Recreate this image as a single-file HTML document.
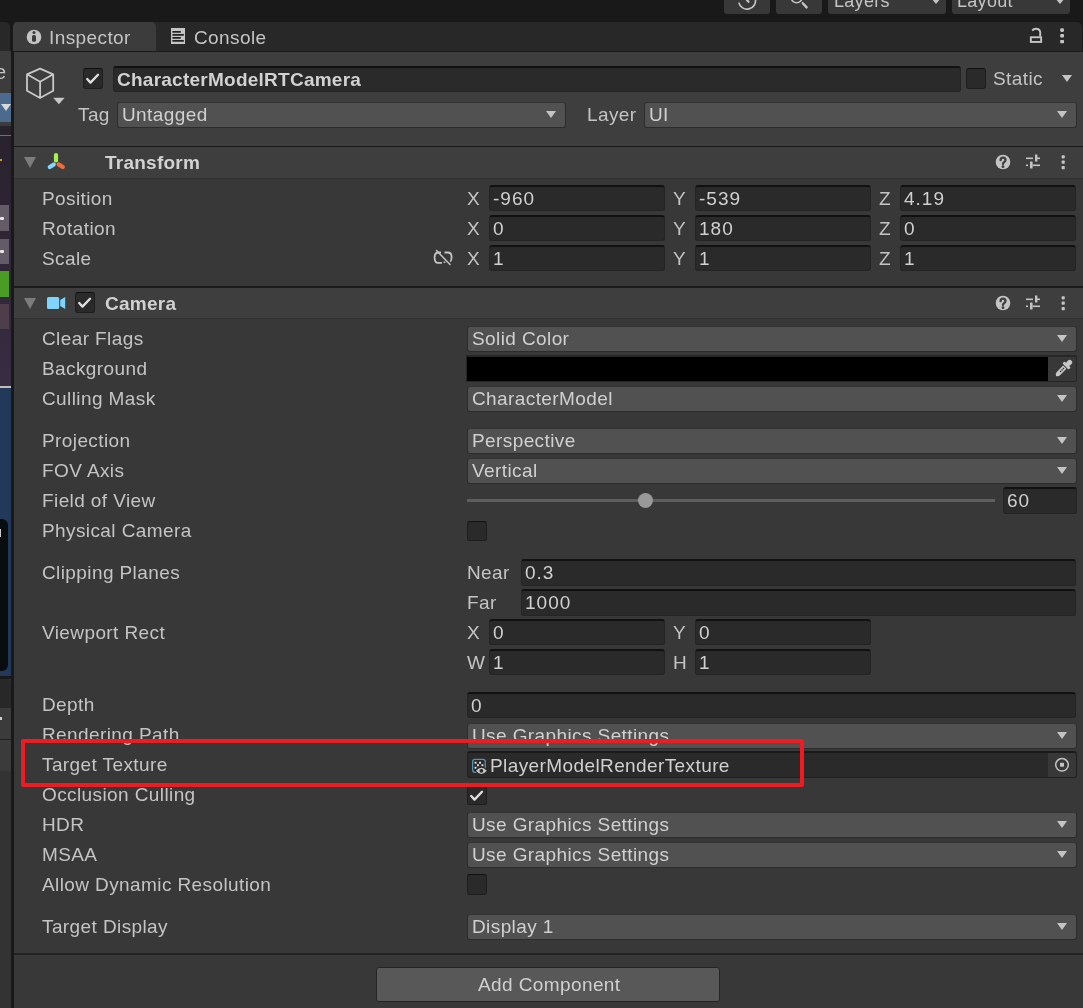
<!DOCTYPE html>
<html><head><meta charset="utf-8"><style>
*{box-sizing:border-box;margin:0;padding:0}
html,body{width:1083px;height:1008px;overflow:hidden;background:#191919;font-family:"Liberation Sans",sans-serif;color:#c4c4c4}
.a{position:absolute}
.t{position:absolute;white-space:nowrap;will-change:transform;font-size:19px;line-height:20px;letter-spacing:0.4px;color:#c4c4c4}
.v{color:#d0d0d0}
.b{font-weight:bold;color:#d2d2d2;letter-spacing:0.25px}
.fld{position:absolute;background:#2a2a2a;border:1px solid #242424;border-top:2px solid #111;border-radius:3px}
.dd{position:absolute;background:#515151;border:1px solid #2c2c2c;border-top-color:#333;border-radius:3px}
.tri{position:absolute;width:0;height:0;border-left:5.5px solid transparent;border-right:5.5px solid transparent;border-top:7px solid #c4c4c4}
.cb{position:absolute;width:20px;height:21px;background:#2a2a2a;border:1px solid #1e1e1e;border-top-color:#111;border-radius:3px}
</style></head><body>
<div class="a" style="left:0px;top:0px;width:1083px;height:22px;background:#191919;"></div>
<div class="a" style="left:724px;top:-4px;width:46px;height:18px;background:#383838;border-radius:3px"></div>
<div class="a" style="left:776px;top:-4px;width:46px;height:18px;background:#383838;border-radius:3px"></div>
<div class="a" style="left:828px;top:-4px;width:118px;height:18px;background:#383838;border-radius:3px"></div>
<div class="a" style="left:952px;top:-4px;width:118px;height:18px;background:#383838;border-radius:3px"></div>
<svg class="a" style="left:724px;top:0" width="100" height="14" viewBox="0 0 100 14">
<path d="M14.8 2.6 A8.4 8.4 0 0 0 31.3 -1.2" fill="none" stroke="#c4c4c4" stroke-width="1.7"/>
<path d="M22 -1 L24.5 1.8" stroke="#c4c4c4" stroke-width="2.2" stroke-linecap="round"/>
<circle cx="72.6" cy="-2.6" r="5.4" fill="none" stroke="#c4c4c4" stroke-width="1.6"/>
<path d="M78.8 3.2 L82.6 7.4" stroke="#c4c4c4" stroke-width="2.4" stroke-linecap="round"/>
</svg>
<div class="t " style="left:834px;top:-9px;font-size:18px;letter-spacing:0.3px">Layers</div>
<div class="tri" style="left:931px;top:-2px;border-top-width:6px"></div>
<div class="t " style="left:957px;top:-9px;font-size:18px;letter-spacing:0.3px">Layout</div>
<div class="tri" style="left:1055px;top:-2px;border-top-width:6px"></div>
<div class="a" style="left:0px;top:51px;width:11px;height:957px;background:#333333;"></div>
<div class="a" style="left:0px;top:22px;width:10px;height:29px;background:#282828;border-top-right-radius:5px"></div>
<div class="a" style="left:0px;top:51px;width:11px;height:42px;background:#3c3c3c;"></div>
<div class="t " style="left:-5px;top:62px;font-size:20px">e</div>
<div class="a" style="left:0px;top:93px;width:11px;height:29px;background:#4b6a8e;"></div>
<div class="a" style="left:1px;top:104px;width:0;height:0;border-left:5px solid transparent;border-right:5px solid transparent;border-top:7px solid #d8d8d8"></div>
<div class="a" style="left:0px;top:122px;width:11px;height:5px;background:#3c3c3c;"></div>
<div class="a" style="left:0px;top:126px;width:11px;height:261px;background:linear-gradient(#28222d,#2e2535 40%,#382c42);"></div>
<div class="a" style="left:0px;top:159px;width:2px;height:2px;background:#c89a20;"></div>
<div class="a" style="left:0px;top:135px;width:11px;height:1px;background:#707070;"></div>
<div class="a" style="left:0px;top:205px;width:9px;height:26px;background:#645b68;"></div>
<div class="a" style="left:0px;top:217px;width:4px;height:3px;background:#e6e6e6;border-radius:1px"></div>
<div class="a" style="left:0px;top:239px;width:9px;height:25px;background:#645b68;"></div>
<div class="a" style="left:0px;top:250px;width:4px;height:3px;background:#e6e6e6;border-radius:1px"></div>
<div class="a" style="left:0px;top:271px;width:9px;height:26px;background:#4a9c24;"></div>
<div class="a" style="left:0px;top:304px;width:9px;height:25px;background:#4d3e49;"></div>
<div class="a" style="left:0px;top:386px;width:11px;height:2px;background:#bdbdbd;"></div>
<div class="a" style="left:0px;top:388px;width:11px;height:288px;background:#22395a;"></div>
<div class="a" style="left:0px;top:519px;width:8px;height:152px;background:#0a0d10;border-radius:0 6px 6px 0"></div>
<div class="a" style="left:0px;top:529px;width:1px;height:8px;background:#cccccc;"></div>
<div class="a" style="left:0px;top:676px;width:11px;height:3px;background:#191919;"></div>
<div class="a" style="left:0px;top:679px;width:11px;height:29px;background:#282828;border-top-right-radius:4px"></div>
<div class="a" style="left:0px;top:708px;width:11px;height:31px;background:#3b3b3b;"></div>
<div class="a" style="left:0px;top:739px;width:11px;height:1px;background:#222222;"></div>
<div class="a" style="left:0px;top:717px;width:2px;height:3px;background:#d0d0d0;"></div>
<div class="a" style="left:0px;top:740px;width:11px;height:31px;background:#3b3b3b;"></div>
<div class="a" style="left:0px;top:771px;width:11px;height:237px;background:#333333;"></div>
<div class="a" style="left:11px;top:0px;width:3px;height:1008px;background:#191919;"></div>
<div class="a" style="left:14px;top:22px;width:1068px;height:29px;background:#282828;border-top-right-radius:5px"></div>
<div class="a" style="left:13px;top:22px;width:143px;height:29px;background:#3c3c3c;border-radius:5px 5px 0 0"></div>
<svg class="a" style="left:26px;top:29px" width="16" height="16" viewBox="0 0 16 16">
<circle cx="8" cy="8" r="7.3" fill="#c4c4c4"/>
<circle cx="8" cy="3.4" r="1.5" fill="#3c3c3c"/>
<rect x="6" y="6" width="4" height="6.8" rx="1.6" fill="#3c3c3c"/></svg>
<div class="t " style="left:49px;top:28px;">Inspector</div>
<svg class="a" style="left:171px;top:28px" width="14" height="16" viewBox="0 0 14 16">
<rect x="0" y="0" width="14" height="16" fill="#c4c4c4"/>
<rect x="1.2" y="3" width="8.8" height="1.7" rx="0.8" fill="#222"/>
<rect x="1.2" y="6" width="11.8" height="1.7" rx="0.8" fill="#222"/>
<rect x="1.2" y="9" width="8.8" height="1.7" rx="0.8" fill="#222"/>
<rect x="1.2" y="12" width="11.8" height="1.7" rx="0.8" fill="#222"/></svg>
<div class="t " style="left:194px;top:28px;">Console</div>
<svg class="a" style="left:1028px;top:26px" width="40" height="20" viewBox="0 0 40 20">
<rect x="2.85" y="11.25" width="10.3" height="4.7" fill="none" stroke="#c4c4c4" stroke-width="1.9"/>
<path d="M4.2 4.6 Q5.6 2.7 7.8 2.7 Q11.8 2.7 12.2 6.2 L12.2 10.5" fill="none" stroke="#c4c4c4" stroke-width="1.9"/>
<rect x="32.2" y="2.2" width="3.8" height="3.8" rx="1.4" fill="#c4c4c4"/><rect x="32.2" y="8" width="3.8" height="3.6" rx="1" fill="#c4c4c4"/><rect x="32.2" y="14" width="3.8" height="3.2" rx="0.6" fill="#c4c4c4"/>
</svg>
<div class="a" style="left:14px;top:51px;width:1069px;height:1px;background:#1a1a1a;"></div>
<div class="a" style="left:14px;top:52px;width:1069px;height:956px;background:#383838;"></div>
<div class="a" style="left:14px;top:52px;width:1069px;height:94px;background:#3e3e3e;"></div>
<div class="a" style="left:14px;top:146px;width:1069px;height:1px;background:#1a1a1a;"></div>
<svg class="a" style="left:24px;top:66px" width="42" height="40" viewBox="0 0 42 40">
 <path d="M16.1 2.6 L29.2 8.3 L29.2 24.8 L16.1 32 L3 24.8 L3 8.3 Z M3 8.3 L16.1 15.8 L29.2 8.3 M16.1 15.8 L16.1 32" fill="none" stroke="#c8c8c8" stroke-width="1.8" stroke-linejoin="round"/>
 <path d="M29.6 31.9 L40.2 31.9 L34.9 38.1 Z" fill="#c8c8c8" stroke="#c8c8c8" stroke-width="0.4" stroke-linejoin="round"/></svg>
<div class="cb" style="left:83px;top:68px;height:21px"></div>
<svg class="a" style="left:83px;top:68px" width="20" height="20" viewBox="0 0 20 20"><path d="M4.2 11 L7.5 14.6 L15 6.8" fill="none" stroke="#e0e0e0" stroke-width="2.3" stroke-linecap="round" stroke-linejoin="round"/></svg>
<div class="fld" style="left:113px;top:66px;width:848px;height:26px"></div>
<div class="t b" style="left:117px;top:70px;">CharacterModelRTCamera</div>
<div class="cb" style="left:966px;top:68px;height:21px"></div>
<div class="t " style="left:993px;top:69px;">Static</div>
<div class="tri" style="left:1062px;top:75px"></div>
<div class="t " style="left:78px;top:105px;">Tag</div>
<div class="dd" style="left:117px;top:102px;width:449px;height:26px"></div>
<div class="t v" style="left:122px;top:105px;">Untagged</div>
<div class="tri" style="left:546px;top:111px"></div>
<div class="t " style="left:587px;top:105px;">Layer</div>
<div class="dd" style="left:644px;top:102px;width:433px;height:26px"></div>
<div class="t v" style="left:649px;top:105px;">UI</div>
<div class="tri" style="left:1057px;top:111px"></div>
<div class="a" style="left:14px;top:147px;width:1069px;height:31px;background:#3e3e3e;"></div>
<div class="a" style="left:14px;top:178px;width:1069px;height:1px;background:#303030;"></div>
<div class="a" style="left:24px;top:157px;width:0;height:0;border-left:6px solid transparent;border-right:6px solid transparent;border-top:11px solid #7c7c7c"></div>
<svg class="a" style="left:44px;top:150px" width="24" height="22" viewBox="0 0 24 22">
<path d="M12 5 L12 10.5" stroke="#a6f24e" stroke-width="4.2" stroke-linecap="round"/>
<path d="M5.8 17 L9.8 14.4" stroke="#80d6fc" stroke-width="4.2" stroke-linecap="round"/>
<path d="M14.6 14.4 L18.8 17" stroke="#f26c3a" stroke-width="4.2" stroke-linecap="round"/>
</svg>
<div class="t b" style="left:105px;top:153px;">Transform</div>
<svg class="a" style="left:994px;top:153px" width="76" height="18" viewBox="0 0 76 18">
<circle cx="9" cy="9" r="7.3" fill="#c4c4c4"/>
<path d="M6.6 7.2 Q6.6 4.6 9 4.6 Q11.5 4.6 11.5 7 Q11.5 8.4 10 9.2 Q9 9.8 9 11" fill="none" stroke="#3e3e3e" stroke-width="2.3" stroke-linecap="round"/>
<circle cx="9" cy="13.7" r="1.4" fill="#3e3e3e"/>
<rect x="32" y="4.5" width="7" height="1.6" fill="#c4c4c4"/><rect x="41" y="1.5" width="2.4" height="7" fill="#c4c4c4"/><rect x="43" y="4.5" width="3" height="1.6" fill="#c4c4c4"/>
<rect x="32" y="11.5" width="2" height="1.6" fill="#c4c4c4"/><rect x="36" y="8.5" width="2.6" height="7" rx="0.6" fill="#c4c4c4"/><rect x="38.6" y="11.5" width="7.4" height="1.6" fill="#c4c4c4"/>
<rect x="67.6" y="2.2" width="3.2" height="3.2" rx="0.8" fill="#c4c4c4"/><rect x="67.6" y="7.6" width="3.2" height="3.2" rx="0.8" fill="#c4c4c4"/><rect x="67.6" y="13" width="3.2" height="3.2" rx="0.8" fill="#c4c4c4"/>
</svg>
<div class="t " style="left:42px;top:189px;">Position</div>
<div class="t " style="left:467px;top:189px;">X</div>
<div class="fld" style="left:489px;top:185px;width:176px;height:26px"></div>
<div class="t v" style="left:493px;top:189px;letter-spacing:1px">-960</div>
<div class="t " style="left:673px;top:189px;">Y</div>
<div class="fld" style="left:695px;top:185px;width:176px;height:26px"></div>
<div class="t v" style="left:699px;top:189px;letter-spacing:1px">-539</div>
<div class="t " style="left:879px;top:189px;">Z</div>
<div class="fld" style="left:900px;top:185px;width:176px;height:26px"></div>
<div class="t v" style="left:904px;top:189px;letter-spacing:1px">4.19</div>
<div class="t " style="left:42px;top:219px;">Rotation</div>
<div class="t " style="left:467px;top:219px;">X</div>
<div class="fld" style="left:489px;top:215px;width:176px;height:26px"></div>
<div class="t v" style="left:493px;top:219px;letter-spacing:1px">0</div>
<div class="t " style="left:673px;top:219px;">Y</div>
<div class="fld" style="left:695px;top:215px;width:176px;height:26px"></div>
<div class="t v" style="left:699px;top:219px;letter-spacing:1px">180</div>
<div class="t " style="left:879px;top:219px;">Z</div>
<div class="fld" style="left:900px;top:215px;width:176px;height:26px"></div>
<div class="t v" style="left:904px;top:219px;letter-spacing:1px">0</div>
<div class="t " style="left:42px;top:249px;">Scale</div>
<div class="t " style="left:467px;top:249px;">X</div>
<div class="fld" style="left:489px;top:245px;width:176px;height:26px"></div>
<div class="t v" style="left:493px;top:249px;letter-spacing:1px">1</div>
<div class="t " style="left:673px;top:249px;">Y</div>
<div class="fld" style="left:695px;top:245px;width:176px;height:26px"></div>
<div class="t v" style="left:699px;top:249px;letter-spacing:1px">1</div>
<div class="t " style="left:879px;top:249px;">Z</div>
<div class="fld" style="left:900px;top:245px;width:176px;height:26px"></div>
<div class="t v" style="left:904px;top:249px;letter-spacing:1px">1</div>
<svg class="a" style="left:432px;top:248px" width="22" height="20" viewBox="0 0 22 20">
<path d="M9 4.5 L6 4.5 Q2.6 4.5 2.6 9.7 Q2.6 14.8 6 14.8 L10 14.8" fill="none" stroke="#c4c4c4" stroke-width="1.8"/>
<path d="M12.5 4.5 L16 4.5 Q19.6 4.5 19.6 9.2 Q19.6 12.4 18.2 13.6" fill="none" stroke="#c4c4c4" stroke-width="1.8"/>
<path d="M12.5 13.5 L12.5 15" stroke="#c4c4c4" stroke-width="1.8"/>
<path d="M4.5 2.5 L18 16.5" stroke="#c4c4c4" stroke-width="1.5" stroke-linecap="round"/>
</svg>
<div class="a" style="left:14px;top:286px;width:1069px;height:2px;background:#1a1a1a;"></div>
<div class="a" style="left:14px;top:288px;width:1069px;height:30px;background:#3e3e3e;"></div>
<div class="a" style="left:14px;top:318px;width:1069px;height:1px;background:#303030;"></div>
<div class="a" style="left:24px;top:298px;width:0;height:0;border-left:6px solid transparent;border-right:6px solid transparent;border-top:11px solid #7c7c7c"></div>
<svg class="a" style="left:46px;top:296px" width="21" height="14" viewBox="0 0 21 14">
<rect x="1" y="1" width="12.2" height="12" rx="1.6" fill="#80d4fc"/>
<path d="M14.2 4 L19.2 1 L19.2 13 L14.2 10 Z" fill="#80d4fc"/></svg>
<div class="cb" style="left:75px;top:292px;height:21px"></div>
<svg class="a" style="left:75px;top:292px" width="20" height="20" viewBox="0 0 20 20"><path d="M4.2 11 L7.5 14.6 L15 6.8" fill="none" stroke="#e0e0e0" stroke-width="2.3" stroke-linecap="round" stroke-linejoin="round"/></svg>
<div class="t b" style="left:105px;top:294px;">Camera</div>
<svg class="a" style="left:994px;top:294px" width="76" height="18" viewBox="0 0 76 18">
<circle cx="9" cy="9" r="7.3" fill="#c4c4c4"/>
<path d="M6.6 7.2 Q6.6 4.6 9 4.6 Q11.5 4.6 11.5 7 Q11.5 8.4 10 9.2 Q9 9.8 9 11" fill="none" stroke="#3e3e3e" stroke-width="2.3" stroke-linecap="round"/>
<circle cx="9" cy="13.7" r="1.4" fill="#3e3e3e"/>
<rect x="32" y="4.5" width="7" height="1.6" fill="#c4c4c4"/><rect x="41" y="1.5" width="2.4" height="7" fill="#c4c4c4"/><rect x="43" y="4.5" width="3" height="1.6" fill="#c4c4c4"/>
<rect x="32" y="11.5" width="2" height="1.6" fill="#c4c4c4"/><rect x="36" y="8.5" width="2.6" height="7" rx="0.6" fill="#c4c4c4"/><rect x="38.6" y="11.5" width="7.4" height="1.6" fill="#c4c4c4"/>
<rect x="67.6" y="2.2" width="3.2" height="3.2" rx="0.8" fill="#c4c4c4"/><rect x="67.6" y="7.6" width="3.2" height="3.2" rx="0.8" fill="#c4c4c4"/><rect x="67.6" y="13" width="3.2" height="3.2" rx="0.8" fill="#c4c4c4"/>
</svg>
<div class="t " style="left:42px;top:329px;">Clear Flags</div>
<div class="t " style="left:42px;top:359px;">Background</div>
<div class="t " style="left:42px;top:389px;">Culling Mask</div>
<div class="t " style="left:42px;top:431px;">Projection</div>
<div class="t " style="left:42px;top:461px;">FOV Axis</div>
<div class="t " style="left:42px;top:491px;">Field of View</div>
<div class="t " style="left:42px;top:521px;">Physical Camera</div>
<div class="t " style="left:42px;top:563px;">Clipping Planes</div>
<div class="t " style="left:42px;top:623px;">Viewport Rect</div>
<div class="t " style="left:42px;top:695px;">Depth</div>
<div class="t " style="left:42px;top:725px;">Rendering Path</div>
<div class="t " style="left:42px;top:755px;">Target Texture</div>
<div class="t " style="left:42px;top:785px;">Occlusion Culling</div>
<div class="t " style="left:42px;top:815px;">HDR</div>
<div class="t " style="left:42px;top:845px;">MSAA</div>
<div class="t " style="left:42px;top:875px;">Allow Dynamic Resolution</div>
<div class="t " style="left:42px;top:917px;">Target Display</div>
<div class="dd" style="left:467px;top:326px;width:610px;height:26px"></div>
<div class="t v" style="left:472px;top:329px;">Solid Color</div>
<div class="tri" style="left:1057px;top:335px"></div>
<div class="a" style="left:466px;top:355px;width:611px;height:27px;background:#262626;border-radius:0 3px 3px 0"></div>
<div class="a" style="left:467px;top:357px;width:581px;height:24px;background:#000000;"></div>
<div class="a" style="left:1048px;top:357px;width:28px;height:24px;background:#383838;border-radius:0 2px 2px 0"></div>
<svg class="a" style="left:1052px;top:357px" width="24" height="24" viewBox="0 0 24 24">
<g transform="translate(4,19) rotate(-45)">
<path d="M0 0 Q1 -2.3 3.4 -2.3 L12.4 -2.3 L12.4 2.3 L3.4 2.3 Q1 2.3 0 0 Z" fill="#c8c8c8"/>
<rect x="5.8" y="-0.7" width="1.4" height="1.4" fill="#383838"/><rect x="7.8" y="-0.7" width="1.4" height="1.4" fill="#383838"/><rect x="9.8" y="-0.7" width="1.4" height="1.4" fill="#383838"/>
<rect x="13.4" y="-4.4" width="3" height="8.8" rx="1" fill="#c8c8c8"/>
<rect x="15.4" y="-2.5" width="6.4" height="5" rx="2.3" fill="#c8c8c8"/>
</g></svg>
<div class="dd" style="left:467px;top:386px;width:610px;height:26px"></div>
<div class="t v" style="left:472px;top:389px;">CharacterModel</div>
<div class="tri" style="left:1057px;top:395px"></div>
<div class="dd" style="left:467px;top:428px;width:610px;height:26px"></div>
<div class="t v" style="left:472px;top:431px;">Perspective</div>
<div class="tri" style="left:1057px;top:437px"></div>
<div class="dd" style="left:467px;top:458px;width:610px;height:26px"></div>
<div class="t v" style="left:472px;top:461px;">Vertical</div>
<div class="tri" style="left:1057px;top:467px"></div>
<div class="a" style="left:467px;top:499px;width:528px;height:3px;background:#5e5e5e;"></div>
<div class="a" style="left:638px;top:493px;width:15px;height:15px;border-radius:8px;background:#999999"></div>
<div class="fld" style="left:1003px;top:487px;width:74px;height:27px"></div>
<div class="t v" style="left:1007px;top:491px;letter-spacing:1px">60</div>
<div class="cb" style="left:467px;top:521px;height:20px"></div>
<div class="t " style="left:467px;top:563px;">Near</div>
<div class="fld" style="left:521px;top:559px;width:555px;height:27px"></div>
<div class="t v" style="left:525px;top:563px;letter-spacing:1px">0.3</div>
<div class="t " style="left:467px;top:593px;">Far</div>
<div class="fld" style="left:521px;top:589px;width:555px;height:27px"></div>
<div class="t v" style="left:525px;top:593px;letter-spacing:1px">1000</div>
<div class="t " style="left:467px;top:623px;">X</div>
<div class="fld" style="left:489px;top:619px;width:176px;height:26px"></div>
<div class="t v" style="left:493px;top:623px;letter-spacing:1px">0</div>
<div class="t " style="left:673px;top:623px;">Y</div>
<div class="fld" style="left:695px;top:619px;width:176px;height:26px"></div>
<div class="t v" style="left:699px;top:623px;letter-spacing:1px">0</div>
<div class="t " style="left:467px;top:653px;">W</div>
<div class="fld" style="left:489px;top:649px;width:176px;height:26px"></div>
<div class="t v" style="left:493px;top:653px;letter-spacing:1px">1</div>
<div class="t " style="left:673px;top:653px;">H</div>
<div class="fld" style="left:695px;top:649px;width:176px;height:26px"></div>
<div class="t v" style="left:699px;top:653px;letter-spacing:1px">1</div>
<div class="fld" style="left:467px;top:692px;width:609px;height:26px"></div>
<div class="t v" style="left:471px;top:696px;letter-spacing:1px">0</div>
<div class="dd" style="left:467px;top:723px;width:610px;height:26px"></div>
<div class="t v" style="left:472px;top:726px;">Use Graphics Settings</div>
<div class="tri" style="left:1057px;top:732px"></div>
<div class="fld" style="left:467px;top:751px;width:610px;height:27px;border-color:#1f1f1f;border-top-color:#1a1a1a"></div>
<div class="t v" style="left:490px;top:756px;">PlayerModelRenderTexture</div>
<div class="a" style="left:1048px;top:753px;width:28px;height:24px;background:#383838;border-radius:0 2px 2px 0"></div>
<svg class="a" style="left:1052px;top:755px" width="20" height="20" viewBox="0 0 20 20">
<circle cx="10" cy="9.8" r="6.3" fill="none" stroke="#c4c4c4" stroke-width="1.5"/>
<rect x="8" y="7.8" width="4" height="4" rx="0.8" fill="#c4c4c4"/></svg>
<svg class="a" style="left:470px;top:757px" width="20" height="20" viewBox="0 0 20 20">
<rect x="2.65" y="2.45" width="12.6" height="12.8" rx="2.2" fill="none" stroke="#5a8fab" stroke-width="1.3"/>
<rect x="4.6" y="4.8" width="1.9" height="1.9" fill="#e6e6e6"/><rect x="9.1" y="4.8" width="1.9" height="1.9" fill="#e6e6e6"/>
<rect x="7" y="7.3" width="1.9" height="1.9" fill="#e6e6e6"/><rect x="11.5" y="7.3" width="1.9" height="1.9" fill="#e6e6e6"/>
<rect x="4.6" y="9.8" width="1.9" height="1.9" fill="#e6e6e6"/>
<path d="M4.6 13.8 Q11.4 5.4 18.2 13.8 Q11.4 22.2 4.6 13.8 Z" fill="#2a2a2a"/>
<path d="M6 13.8 Q11.4 7.5 16.8 13.8 Q11.4 20.1 6 13.8 Z" fill="#c8c8c8"/>
<circle cx="11.4" cy="13.8" r="1.9" fill="#2a2a2a"/></svg>
<div class="cb" style="left:467px;top:785px;height:20px"></div>
<svg class="a" style="left:467px;top:785px" width="20" height="20" viewBox="0 0 20 20"><path d="M4.2 11 L7.5 14.6 L15 6.8" fill="none" stroke="#e0e0e0" stroke-width="2.3" stroke-linecap="round" stroke-linejoin="round"/></svg>
<div class="dd" style="left:467px;top:812px;width:610px;height:26px"></div>
<div class="t v" style="left:472px;top:815px;">Use Graphics Settings</div>
<div class="tri" style="left:1057px;top:821px"></div>
<div class="dd" style="left:467px;top:842px;width:610px;height:26px"></div>
<div class="t v" style="left:472px;top:845px;">Use Graphics Settings</div>
<div class="tri" style="left:1057px;top:851px"></div>
<div class="cb" style="left:467px;top:874px;height:21px"></div>
<div class="dd" style="left:467px;top:914px;width:610px;height:26px"></div>
<div class="t v" style="left:472px;top:917px;">Display 1</div>
<div class="tri" style="left:1057px;top:923px"></div>
<div class="a" style="left:14px;top:953px;width:1069px;height:2px;background:#222222;"></div>
<div class="a" style="left:376px;top:967px;width:344px;height:35px;background:#585858;border:1px solid #252525;border-radius:3px"></div>
<div class="t v" style="left:478px;top:975px;">Add Component</div>
<div class="a" style="left:21px;top:739px;width:783px;height:48px;border:4px solid #ec1c24;border-radius:2px"></div>
</body></html>
